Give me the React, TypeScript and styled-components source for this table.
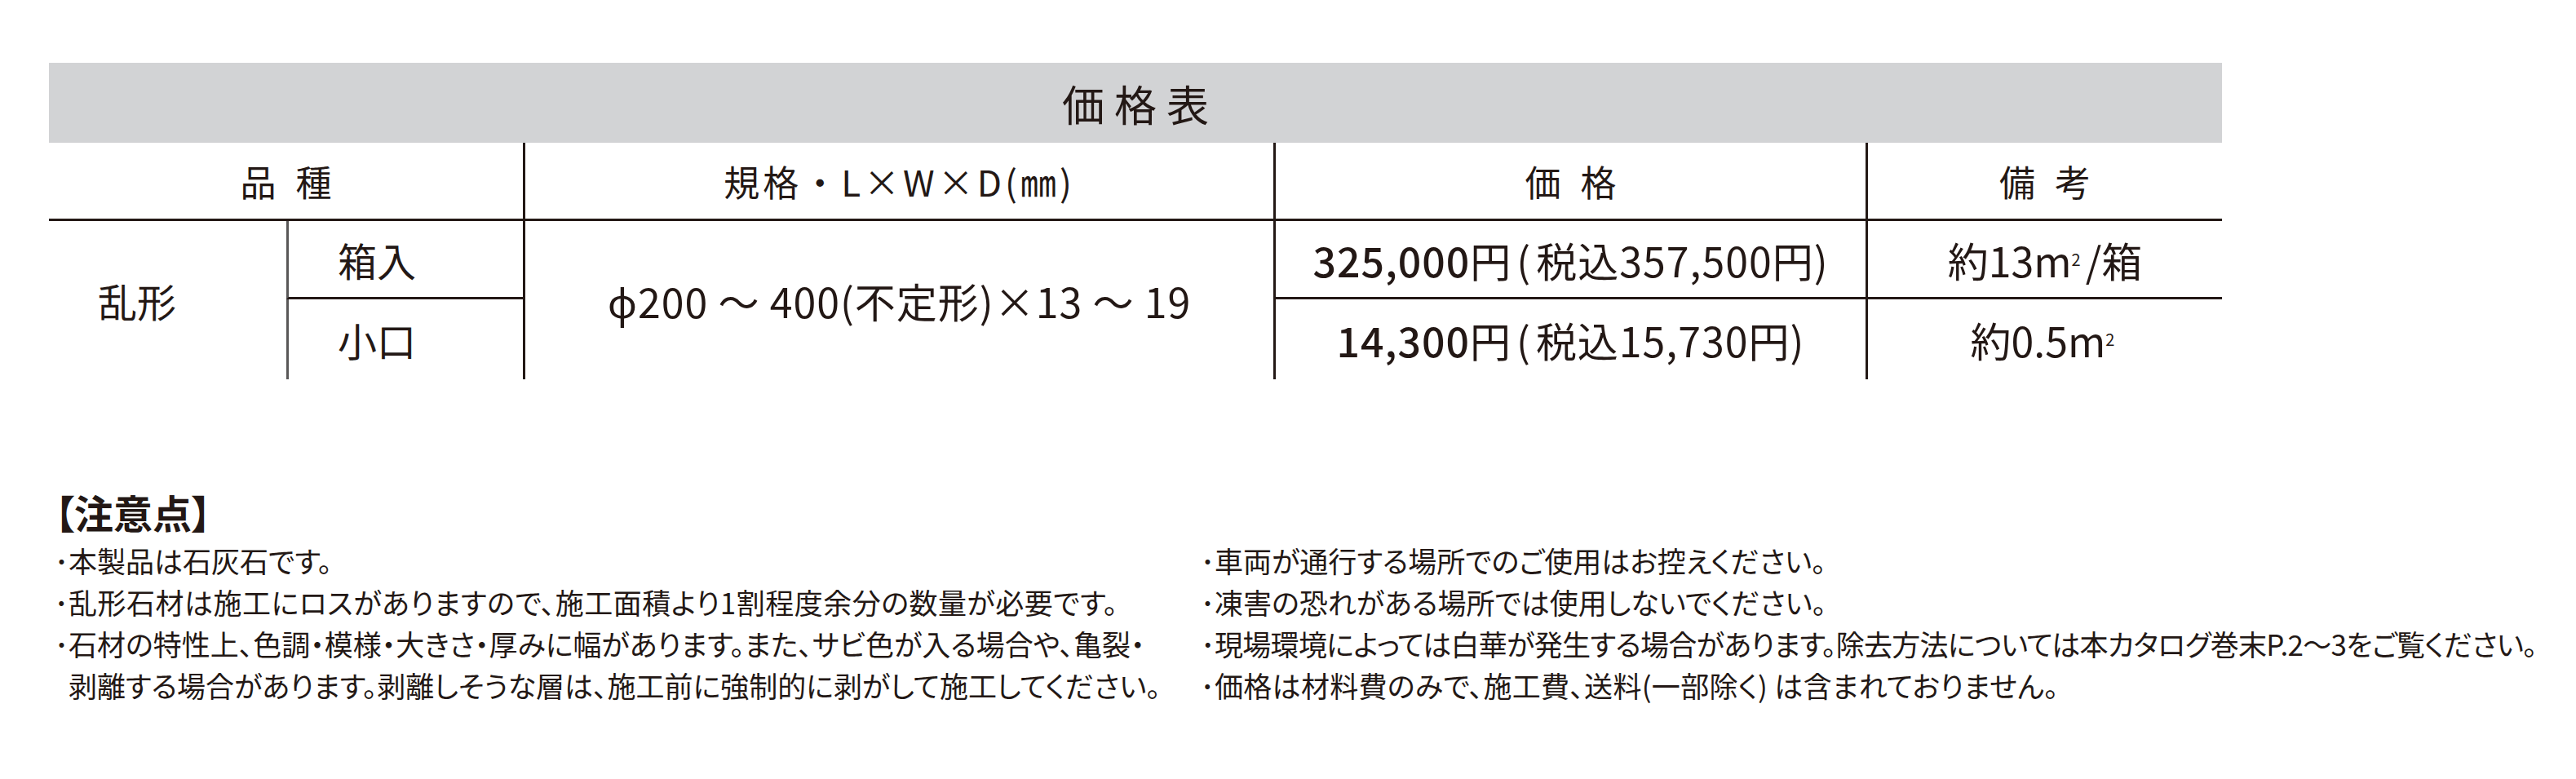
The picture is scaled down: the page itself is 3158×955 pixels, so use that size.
import React from 'react';
import styled, { createGlobalStyle } from 'styled-components';

const GlobalStyle = createGlobalStyle`
  html, body {
    margin: 0;
    padding: 0;
    background: #ffffff;
  }
  body {
    font-family: "Noto Sans CJK JP", "Noto Sans", sans-serif;
    color: #231815;
  }
`;

const Page = styled.div`
  width: 3158px;
  height: 955px;
  box-sizing: border-box;
  padding: 77px 0 0 60px;
`;

const PriceTable = styled.div`
  display: grid;
  width: 2664px;
  grid-template-columns: 291px 290px 920px 726px 437px;
  grid-template-rows: 98px 96px 96px 98px;
`;

const TitleBar = styled.div`
  grid-column: 1 / span 5;
  background: #d2d3d5;
  display: flex;
  align-items: center;
  justify-content: center;
  font-size: 52px;
  letter-spacing: 12px;
  padding-left: 12px;
`;

interface CellProps {
  $col: string;
  $row: string;
  $left?: 'dark' | 'gray';
  $bottom?: boolean;
  $align?: 'center' | 'start';
  $size?: number;
  $track?: number;
}

const Cell = styled.div<CellProps>`
  grid-column: ${(p) => p.$col};
  grid-row: ${(p) => p.$row};
  box-sizing: border-box;
  display: flex;
  align-items: center;
  justify-content: ${(p) => (p.$align === 'start' ? 'flex-start' : 'center')};
  padding-left: ${(p) => (p.$align === 'start' ? '60px' : '0')};
  border-left: ${(p) =>
    p.$left === 'dark' ? '3px solid #231815' : p.$left === 'gray' ? '3px solid #595757' : 'none'};
  border-bottom: ${(p) => (p.$bottom ? '3px solid #231815' : 'none')};
  font-size: ${(p) => p.$size ?? 48}px;
  letter-spacing: ${(p) => p.$track ?? 0}px;
  white-space: nowrap;
`;

const Spaced = styled.span`
  letter-spacing: 0.55em;
  margin-right: -0.55em;
`;

const Strong = styled.span`
  font-weight: 500;
`;

const Sup = styled.sup`
  font-size: 0.4em;
  vertical-align: 1.3em;
  line-height: 0;
  margin-right: 6px;
`;

const Paren = styled.span`
  margin: 0 6px;
`;

const Notes = styled.section`
  margin-top: 132px;
  padding-left: 7px;
`;

const NotesTitle = styled.h2`
  margin: 0 0 4px 0;
  font-size: 48px;
  font-weight: 700;
  line-height: 60px;
  font-feature-settings: "palt";
`;

const NotesGrid = styled.div`
  display: grid;
  grid-template-columns: 1405px 1640px;
`;

const NoteList = styled.ul`
  margin: 0;
  padding: 0;
  list-style: none;
`;

const NoteItem = styled.li<{ $track?: number }>`
  display: flex;
  font-size: 35px;
  line-height: 51px;
  white-space: nowrap;
  font-feature-settings: "palt";
  letter-spacing: ${(p) => p.$track ?? 0}px;
`;

const Bullet = styled.span`
  width: 17px;
  flex: none;
  overflow: hidden;
  display: flex;
  justify-content: center;
`;

interface Note {
  text: React.ReactNode;
  track?: number;
}

const leftNotes: Note[] = [
  { text: '本製品は石灰石です。' },
  { text: '乱形石材は施工にロスがありますので、施工面積より1割程度余分の数量が必要です。', track: 0.5 },
  {
    text: (
      <>
        石材の特性上、色調・模様・大きさ・厚みに幅があります。また、サビ色が入る場合や、亀裂・
        <br />
        剥離する場合があります。剥離しそうな層は、施工前に強制的に剥がして施工してください。
      </>
    ),
  },
];

const rightNotes: Note[] = [
  { text: '車両が通行する場所でのご使用はお控えください。' },
  { text: '凍害の恐れがある場所では使用しないでください。' },
  {
    text: '現場環境によっては白華が発生する場合があります。除去方法については本カタログ巻末P.2〜3をご覧ください。',
    track: -0.7,
  },
  { text: '価格は材料費のみで、施工費、送料(一部除く) は含まれておりません。', track: 0.3 },
];

const NoteColumn: React.FC<{ items: Note[] }> = ({ items }) => (
  <NoteList>
    {items.map((e, i) => (
      <NoteItem key={i} $track={e.track}>
        <Bullet>･</Bullet>
        <span>{e.text}</span>
      </NoteItem>
    ))}
  </NoteList>
);

const App: React.FC = () => {
  return (
    <Page>
      <GlobalStyle />
      <PriceTable>
        <TitleBar>価格表</TitleBar>

        <Cell $col="1 / span 2" $row="2" $bottom $size={44}>
          <Spaced>品種</Spaced>
        </Cell>
        <Cell $col="3" $row="2" $left="dark" $bottom $size={44} $track={4}>
          規格・L×W×D(㎜)
        </Cell>
        <Cell $col="4" $row="2" $left="dark" $bottom $size={44}>
          <Spaced>価格</Spaced>
        </Cell>
        <Cell $col="5" $row="2" $left="dark" $bottom $size={44}>
          <Spaced>備考</Spaced>
        </Cell>

        <Cell $col="1" $row="3 / span 2" $align="start">乱形</Cell>
        <Cell $col="2" $row="3" $left="gray" $bottom $align="start">箱入</Cell>
        <Cell $col="2" $row="4" $left="gray" $align="start">小口</Cell>
        <Cell $col="3" $row="3 / span 2" $left="dark" $size={50} $track={1}>
          ϕ200 〜 400(不定形)×13 〜 19
        </Cell>
        <Cell $col="4" $row="3" $left="dark" $bottom $size={50} $track={1}>
          <Strong>325,000</Strong>円<Paren>(</Paren>税込357,500円)
        </Cell>
        <Cell $col="5" $row="3" $left="dark" $bottom $size={50}>
          約13m<Sup>2</Sup>/箱
        </Cell>
        <Cell $col="4" $row="4" $left="dark" $size={50} $track={1}>
          <Strong>14,300</Strong>円<Paren>(</Paren>税込15,730円)
        </Cell>
        <Cell $col="5" $row="4" $left="dark" $size={50}>
          約0.5m<Sup>2</Sup>
        </Cell>
      </PriceTable>

      <Notes>
        <NotesTitle>【注意点】</NotesTitle>
        <NotesGrid>
          <NoteColumn items={leftNotes} />
          <NoteColumn items={rightNotes} />
        </NotesGrid>
      </Notes>
    </Page>
  );
};

export default App;
